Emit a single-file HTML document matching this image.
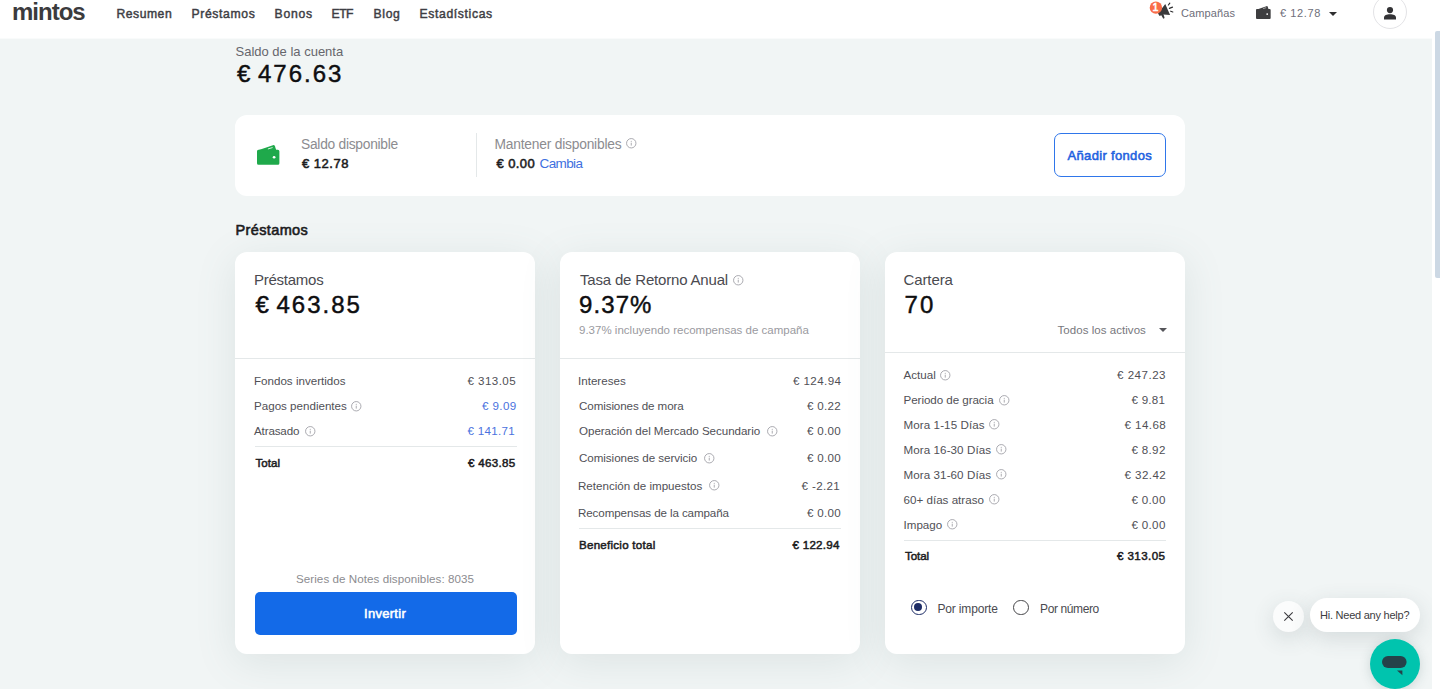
<!DOCTYPE html>
<html lang="es">
<head>
<meta charset="utf-8">
<title>Mintos</title>
<style>
*{box-sizing:border-box;margin:0;padding:0}
html,body{width:1440px;height:689px;overflow:hidden;background:#fff}
body{font-family:"Liberation Sans",sans-serif;color:#1c1c1e;position:relative;font-size:12px}
.t{position:absolute;white-space:nowrap;display:block}
svg{position:absolute;overflow:visible}
#view{position:absolute;left:0;top:38px;width:1432px;height:651px;overflow:hidden}
#view>main,#view>aside{top:-38px}
#page{position:absolute;left:0;top:38px;width:1432px;height:651px;background:#f1f5f5}
header{position:absolute;left:0;top:0;width:1440px;height:38px;background:#fff}
header:after{content:"";position:absolute;left:0;top:38px;width:1432px;height:1px;background:rgba(255,255,255,.55)}
main,section,nav,footer,aside{position:absolute;left:0;top:0}
.card{position:absolute;background:#fff;border-radius:12px}
.sh{box-shadow:0 8px 40px rgba(100,128,128,.14)}
.hl{position:absolute;height:1px;background:#e4e8e9}
.vl{position:absolute;width:1px;background:#e4e8e9}
.avatar{position:absolute;left:1373px;top:-5.5px;width:34px;height:34px;border-radius:50%;border:1px solid #e3e3e6;background:#fff}
.btn-o{position:absolute;left:1054px;top:133px;width:112px;height:44px;border:1px solid #2f76ea;border-radius:7px;background:#fff}
.btn-p{position:absolute;left:254.5px;top:591.5px;width:262px;height:43.5px;border-radius:5px;background:#136ae8}
.radio{position:absolute;width:15.6px;height:15.6px;border-radius:50%;border:1.6px solid #454548;background:#fff}
.radio.on{border-color:#1d2c66}
.radio.on:after{content:"";position:absolute;left:2.2px;top:2.2px;width:8px;height:8px;border-radius:50%;background:#1d2c66}
.sbthumb{position:absolute;left:1435px;top:31px;width:5px;height:247px;background:#ccd8e4;border-radius:2px 0 0 2px}
.bubble{position:absolute;left:1310px;top:598px;width:110px;height:34px;border-radius:17px;background:#fff;box-shadow:0 6px 22px rgba(60,80,90,.16)}
.close{position:absolute;left:1273px;top:601px;width:31px;height:31px;border-radius:50%;background:#fbfcfc;box-shadow:0 6px 22px rgba(60,80,90,.16)}
.fab{position:absolute;left:1369.5px;top:638.5px;width:50px;height:50px;border-radius:50%;background:#00c4ae;box-shadow:0 2px 12px rgba(40,80,80,.18)}
.logo{font-size:24px;font-weight:700;color:#3b3b3d;line-height:29px}
.nav{font-size:12.2px;font-weight:400;color:#3e3e44;line-height:15px;-webkit-text-stroke:0.45px #3e3e44}
.hr{font-size:11px;font-weight:400;color:#6e6e7a;line-height:13px}
.lbl14{font-size:13.8px;font-weight:400;color:#8c8c90;line-height:17px}
.lbl14a{font-size:13px;font-weight:400;color:#66666c;line-height:16px}
.val14{font-size:13px;font-weight:400;color:#1c1c1e;line-height:16px;-webkit-text-stroke:0.55px #1c1c1e}
.link14{font-size:13.5px;font-weight:400;color:#4070e0;line-height:16px}
.h2{font-size:14.5px;font-weight:400;color:#1c1c1e;line-height:17px;-webkit-text-stroke:0.6px #1c1c1e}
.ct{font-size:15px;font-weight:400;color:#4a4a50;line-height:18px}
.big{font-size:24px;font-weight:400;color:#0e0e10;line-height:29px;-webkit-text-stroke:0.45px #0e0e10;word-spacing:-3px}
.big2{font-size:24px;font-weight:400;color:#0e0e10;line-height:29px}
.row{font-size:11.6px;font-weight:400;color:#505056;line-height:14px}
.rowb{font-size:11.6px;font-weight:400;color:#1c1c1e;line-height:14px;-webkit-text-stroke:0.5px #1c1c1e}
.rowblue{font-size:11.6px;font-weight:400;color:#4a72de;line-height:14px}
.sub{font-size:11.5px;font-weight:400;color:#9a9aa0;line-height:14px}
.sel{font-size:11.5px;font-weight:400;color:#77777d;line-height:14px}
.note{font-size:11.6px;font-weight:400;color:#8c8c90;line-height:14px}
.btn{font-size:13px;font-weight:400;color:#ffffff;line-height:16px;-webkit-text-stroke:0.55px #ffffff}
.btno{font-size:13px;font-weight:400;color:#1f62e0;line-height:16px;-webkit-text-stroke:0.55px #1f62e0}
.rlbl{font-size:12px;font-weight:400;color:#4a4a50;line-height:14px}
.chat{font-size:11px;font-weight:400;color:#3c3c40;line-height:13px}
.badge{font-size:10.5px;font-weight:400;color:#ffffff;line-height:13px;-webkit-text-stroke:0.6px #fff}
</style>
</head>
<body>
<div id="page"></div>
<header>
  <span class="t logo" style="left:12.00px;top:-3.00px;letter-spacing:-1.000px">mintos</span>
  <nav>
  <span class="t nav" style="left:116.50px;top:7.00px;letter-spacing:0.500px">Resumen</span>
<span class="t nav" style="left:191.50px;top:7.00px;letter-spacing:0.625px">Préstamos</span>
<span class="t nav" style="left:274.50px;top:7.00px;letter-spacing:0.750px">Bonos</span>
<span class="t nav" style="left:331.50px;top:7.00px;letter-spacing:-0.500px">ETF</span>
<span class="t nav" style="left:373.50px;top:7.00px;letter-spacing:0.667px">Blog</span>
<span class="t nav" style="left:419.50px;top:7.00px;letter-spacing:0.636px">Estadísticas</span>
  </nav>
  <div class="hright">
    <!-- megaphone -->
    <svg style="left:1144px;top:0" width="36" height="24" viewBox="0 0 36 24">
      <path d="M21.25 3.9L26.1 14.9L19.4 14.5L19.9 15.4L20.6 18L19.3 18.7L17.3 15.2L15.6 16L14 13.6Z" fill="#3a3a3c"/>
      <path d="M24.4 5L25.8 3.1M25.4 8.4L28.5 7.1M26.7 11.2L28.8 12" stroke="#2c2c2e" stroke-width="1.15" stroke-linecap="round" fill="none"/>
      <circle cx="11.9" cy="7.65" r="6.2" fill="#f96d48"/>
    </svg>
    <span class="t badge" style="left:1152.60px;top:1.00px">1</span>
<span class="t hr" style="left:1181.00px;top:7.00px;letter-spacing:0.114px">Campañas</span>
<span class="t hr" style="left:1280.00px;top:7.00px;letter-spacing:0.600px">€ 12.78</span>
    <!-- wallet dark -->
    <svg style="left:1256.2px;top:6.4px" width="14.8" height="12.9" viewBox="0 0 22.6 19.7"><path fill="#3e3e40" d="M1.5 4.7H20.9A1.5 1.5 0 0 1 22.4 6.2V18.2A1.5 1.5 0 0 1 20.9 19.7H1.5A1.5 1.5 0 0 1 0 18.2V6.2A1.5 1.5 0 0 1 1.5 4.7Z"/><path fill="#3e3e40" d="M0.4 5.6L15.9 0.25Q17.4 -0.25 17.95 1.2L19.3 5.2Z"/><path d="M10.9 4L15.6 2.55" stroke="#fff" stroke-width="0.8" fill="none"/><circle cx="17.1" cy="12.25" r="1.35" fill="#fff"/></svg>
    <svg style="left:1329px;top:11.7px" width="8" height="4" viewBox="0 0 8 4"><path d="M0 0h8L4 4z" fill="#2e2e30"/></svg>
    <div class="avatar"></div>
    <svg style="left:1384px;top:6.5px" width="12" height="12.5" viewBox="0 0 12 12.5">
      <circle cx="6" cy="3.1" r="3.1" fill="#333336"/>
      <path d="M0 12.5V10.6C0 8.4 2.6 7.2 6 7.2s6 1.2 6 3.4v1.9z" fill="#333336"/>
    </svg>
  </div>
</header>
<div class="sbthumb"></div>
<div id="view">
<main>
  <section class="account">
    <span class="t lbl14a" style="left:235.50px;top:44.00px">Saldo de la cuenta</span>
<span class="t big" style="left:237.00px;top:59.00px;letter-spacing:2.000px">€ 476.63</span>
    <div class="card" style="left:235px;top:115px;width:950px;height:81px">
    </div>
    <!-- green wallet -->
    <svg style="left:257.4px;top:144.9px" width="22.6" height="19.7" viewBox="0 0 22.6 19.7"><path fill="#1fa94b" d="M1.5 4.7H20.9A1.5 1.5 0 0 1 22.4 6.2V18.2A1.5 1.5 0 0 1 20.9 19.7H1.5A1.5 1.5 0 0 1 0 18.2V6.2A1.5 1.5 0 0 1 1.5 4.7Z"/><path fill="#1fa94b" d="M0.4 5.6L15.9 0.25Q17.4 -0.25 17.95 1.2L19.3 5.2Z"/><path d="M10.9 4L15.6 2.55" stroke="#fff" stroke-width="0.8" fill="none"/><circle cx="17.1" cy="12.25" r="1.35" fill="#fff"/></svg>
    <div class="vl" style="left:476px;top:133px;height:44px"></div>
    <div class="btn-o"></div>
    <span class="t lbl14" style="left:301.00px;top:136.00px;letter-spacing:-0.267px">Saldo disponible</span>
<span class="t val14" style="left:302.00px;top:156.00px;letter-spacing:0.500px">€ 12.78</span>
<span class="t lbl14" style="left:494.50px;top:136.00px;letter-spacing:-0.211px">Mantener disponibles</span>
<span class="t val14" style="left:496.50px;top:156.00px;letter-spacing:0.400px">€ 0.00</span>
<span class="t link14" style="left:539.50px;top:156.00px;letter-spacing:-0.600px">Cambia</span>
<span class="t btno" style="left:1067.50px;top:148.00px;letter-spacing:0.333px">Añadir fondos</span>
    <svg class="info" style="left:626.0px;top:137.9px" width="10.5" height="10.5" viewBox="0 0 10.5 10.5"><circle cx="5.25" cy="5.25" r="4.7" fill="none" stroke="#a2a2a8" stroke-width="0.9"/><path d="M5.25 4.7v2.9" stroke="#a2a2a8" stroke-width="0.9"/><circle cx="5.25" cy="3.2" r="0.55" fill="#a2a2a8"/></svg>
  </section>
  <section class="loans">
    <span class="t h2" style="left:235.50px;top:222.00px;letter-spacing:0.375px">Préstamos</span>
    <div class="card sh" style="left:235px;top:252px;width:300px;height:402px"></div>
    <div class="hl" style="left:235px;top:358px;width:300px"></div>
    <div class="hl" style="left:254.5px;top:446px;width:262px"></div>
    <div class="btn-p"></div>
    <span class="t ct" style="left:254.00px;top:271.00px;letter-spacing:-0.250px">Préstamos</span>
<span class="t big" style="left:255.50px;top:290.00px;letter-spacing:2.000px">€ 463.85</span>
<span class="t row" style="left:254.00px;top:374.00px">Fondos invertidos</span>
<span class="t row" style="left:467.50px;top:374.00px;letter-spacing:0.429px">€ 313.05</span>
<span class="t row" style="left:254.00px;top:399.00px">Pagos pendientes</span>
<span class="t rowblue" style="left:482.00px;top:399.00px;letter-spacing:0.400px">€ 9.09</span>
<span class="t row" style="left:254.00px;top:424.00px;letter-spacing:-0.143px">Atrasado</span>
<span class="t rowblue" style="left:467.50px;top:424.00px;letter-spacing:0.286px">€ 141.71</span>
<span class="t rowb" style="left:255.50px;top:456.00px">Total</span>
<span class="t rowb" style="left:468.00px;top:456.00px;letter-spacing:0.286px">€ 463.85</span>
<span class="t note" style="left:296.00px;top:572.00px;letter-spacing:0.062px">Series de Notes disponibles: 8035</span>
<span class="t btn" style="left:364.00px;top:606.00px;letter-spacing:0.286px">Invertir</span>
    <svg class="info" style="left:351.0px;top:400.8px" width="10.5" height="10.5" viewBox="0 0 10.5 10.5"><circle cx="5.25" cy="5.25" r="4.7" fill="none" stroke="#a2a2a8" stroke-width="0.9"/><path d="M5.25 4.7v2.9" stroke="#a2a2a8" stroke-width="0.9"/><circle cx="5.25" cy="3.2" r="0.55" fill="#a2a2a8"/></svg>
    <svg class="info" style="left:304.5px;top:425.8px" width="10.5" height="10.5" viewBox="0 0 10.5 10.5"><circle cx="5.25" cy="5.25" r="4.7" fill="none" stroke="#a2a2a8" stroke-width="0.9"/><path d="M5.25 4.7v2.9" stroke="#a2a2a8" stroke-width="0.9"/><circle cx="5.25" cy="3.2" r="0.55" fill="#a2a2a8"/></svg>
  </section>
  <section class="returns">
    <div class="card sh" style="left:560px;top:252px;width:300px;height:402px"></div>
    <div class="hl" style="left:560px;top:358px;width:300px"></div>
    <div class="hl" style="left:579px;top:528px;width:262px"></div>
    <span class="t ct" style="left:580.00px;top:271.00px;letter-spacing:-0.180px">Tasa de Retorno Anual</span>
<span class="t big" style="left:579.00px;top:290.00px;letter-spacing:1.100px">9.37%</span>
<span class="t sub" style="left:579.00px;top:323.00px;letter-spacing:0.011px">9.37% incluyendo recompensas de campaña</span>
<span class="t row" style="left:578.00px;top:374.00px">Intereses</span>
<span class="t row" style="left:793.00px;top:374.00px;letter-spacing:0.400px">€ 124.94</span>
<span class="t row" style="left:579.00px;top:399.00px;letter-spacing:-0.094px">Comisiones de mora</span>
<span class="t row" style="left:807.00px;top:399.00px;letter-spacing:0.280px">€ 0.22</span>
<span class="t row" style="left:579.00px;top:424.00px;letter-spacing:-0.039px">Operación del Mercado Secundario</span>
<span class="t row" style="left:807.00px;top:424.00px;letter-spacing:0.280px">€ 0.00</span>
<span class="t row" style="left:579.00px;top:451.00px;letter-spacing:-0.048px">Comisiones de servicio</span>
<span class="t row" style="left:807.00px;top:451.00px;letter-spacing:0.280px">€ 0.00</span>
<span class="t row" style="left:578.00px;top:479.00px;letter-spacing:-0.010px">Retención de impuestos</span>
<span class="t row" style="left:801.50px;top:479.00px;letter-spacing:0.367px">€ -2.21</span>
<span class="t row" style="left:578.00px;top:506.00px;letter-spacing:-0.100px">Recompensas de la campaña</span>
<span class="t row" style="left:807.00px;top:506.00px;letter-spacing:0.280px">€ 0.00</span>
<span class="t rowb" style="left:579.00px;top:538.00px;letter-spacing:0.243px">Beneficio total</span>
<span class="t rowb" style="left:792.50px;top:538.00px;letter-spacing:0.257px">€ 122.94</span>
    <svg class="info" style="left:732.5px;top:274.8px" width="10.5" height="10.5" viewBox="0 0 10.5 10.5"><circle cx="5.25" cy="5.25" r="4.7" fill="none" stroke="#a2a2a8" stroke-width="0.9"/><path d="M5.25 4.7v2.9" stroke="#a2a2a8" stroke-width="0.9"/><circle cx="5.25" cy="3.2" r="0.55" fill="#a2a2a8"/></svg>
    <svg class="info" style="left:766.6px;top:425.6px" width="10.5" height="10.5" viewBox="0 0 10.5 10.5"><circle cx="5.25" cy="5.25" r="4.7" fill="none" stroke="#a2a2a8" stroke-width="0.9"/><path d="M5.25 4.7v2.9" stroke="#a2a2a8" stroke-width="0.9"/><circle cx="5.25" cy="3.2" r="0.55" fill="#a2a2a8"/></svg>
    <svg class="info" style="left:703.6px;top:452.8px" width="10.5" height="10.5" viewBox="0 0 10.5 10.5"><circle cx="5.25" cy="5.25" r="4.7" fill="none" stroke="#a2a2a8" stroke-width="0.9"/><path d="M5.25 4.7v2.9" stroke="#a2a2a8" stroke-width="0.9"/><circle cx="5.25" cy="3.2" r="0.55" fill="#a2a2a8"/></svg>
    <svg class="info" style="left:708.8px;top:480.1px" width="10.5" height="10.5" viewBox="0 0 10.5 10.5"><circle cx="5.25" cy="5.25" r="4.7" fill="none" stroke="#a2a2a8" stroke-width="0.9"/><path d="M5.25 4.7v2.9" stroke="#a2a2a8" stroke-width="0.9"/><circle cx="5.25" cy="3.2" r="0.55" fill="#a2a2a8"/></svg>
  </section>
  <section class="portfolio">
    <div class="card sh" style="left:885px;top:252px;width:300px;height:402px"></div>
    <div class="hl" style="left:885px;top:352px;width:300px"></div>
    <div class="hl" style="left:904px;top:540px;width:262px"></div>
    <svg style="left:1158.5px;top:328px" width="8" height="4" viewBox="0 0 8 4"><path d="M0 0h8L4 4z" fill="#55555a"/></svg>
    <div class="radio on" style="left:911.2px;top:599.6px"></div>
    <div class="radio" style="left:1013.2px;top:599.6px"></div>
    <span class="t ct" style="left:903.50px;top:271.00px;letter-spacing:-0.100px">Cartera</span>
<span class="t big" style="left:904.50px;top:290.00px;letter-spacing:2.200px">70</span>
<span class="t sel" style="left:1057.50px;top:323.00px;letter-spacing:0.050px">Todos los activos</span>
<span class="t row" style="left:903.50px;top:368.00px;letter-spacing:0.040px">Actual</span>
<span class="t row" style="left:1117.00px;top:368.00px;letter-spacing:0.486px">€ 247.23</span>
<span class="t row" style="left:903.50px;top:393.00px;letter-spacing:-0.050px">Periodo de gracia</span>
<span class="t row" style="left:1131.50px;top:393.00px;letter-spacing:0.240px">€ 9.81</span>
<span class="t row" style="left:903.50px;top:418.00px;letter-spacing:0.092px">Mora 1-15 Días</span>
<span class="t row" style="left:1124.50px;top:418.00px;letter-spacing:0.433px">€ 14.68</span>
<span class="t row" style="left:903.50px;top:443.00px;letter-spacing:0.086px">Mora 16-30 Días</span>
<span class="t row" style="left:1131.50px;top:443.00px;letter-spacing:0.320px">€ 8.92</span>
<span class="t row" style="left:903.50px;top:468.00px;letter-spacing:0.086px">Mora 31-60 Días</span>
<span class="t row" style="left:1124.50px;top:468.00px;letter-spacing:0.433px">€ 32.42</span>
<span class="t row" style="left:903.50px;top:493.00px;letter-spacing:0.014px">60+ días atraso</span>
<span class="t row" style="left:1131.50px;top:493.00px;letter-spacing:0.320px">€ 0.00</span>
<span class="t row" style="left:903.50px;top:518.00px">Impago</span>
<span class="t row" style="left:1131.50px;top:518.00px;letter-spacing:0.320px">€ 0.00</span>
<span class="t rowb" style="left:905.00px;top:549.00px;letter-spacing:-0.100px">Total</span>
<span class="t rowb" style="left:1117.00px;top:549.00px;letter-spacing:0.400px">€ 313.05</span>
<span class="t rlbl" style="left:937.50px;top:602.00px;letter-spacing:-0.160px">Por importe</span>
<span class="t rlbl" style="left:1040.00px;top:602.00px;letter-spacing:-0.378px">Por número</span>
    <svg class="info" style="left:940.2px;top:369.6px" width="10.5" height="10.5" viewBox="0 0 10.5 10.5"><circle cx="5.25" cy="5.25" r="4.7" fill="none" stroke="#a2a2a8" stroke-width="0.9"/><path d="M5.25 4.7v2.9" stroke="#a2a2a8" stroke-width="0.9"/><circle cx="5.25" cy="3.2" r="0.55" fill="#a2a2a8"/></svg>
    <svg class="info" style="left:999.0px;top:394.6px" width="10.5" height="10.5" viewBox="0 0 10.5 10.5"><circle cx="5.25" cy="5.25" r="4.7" fill="none" stroke="#a2a2a8" stroke-width="0.9"/><path d="M5.25 4.7v2.9" stroke="#a2a2a8" stroke-width="0.9"/><circle cx="5.25" cy="3.2" r="0.55" fill="#a2a2a8"/></svg>
    <svg class="info" style="left:989.4px;top:419.4px" width="10.5" height="10.5" viewBox="0 0 10.5 10.5"><circle cx="5.25" cy="5.25" r="4.7" fill="none" stroke="#a2a2a8" stroke-width="0.9"/><path d="M5.25 4.7v2.9" stroke="#a2a2a8" stroke-width="0.9"/><circle cx="5.25" cy="3.2" r="0.55" fill="#a2a2a8"/></svg>
    <svg class="info" style="left:996.4px;top:444.4px" width="10.5" height="10.5" viewBox="0 0 10.5 10.5"><circle cx="5.25" cy="5.25" r="4.7" fill="none" stroke="#a2a2a8" stroke-width="0.9"/><path d="M5.25 4.7v2.9" stroke="#a2a2a8" stroke-width="0.9"/><circle cx="5.25" cy="3.2" r="0.55" fill="#a2a2a8"/></svg>
    <svg class="info" style="left:996.4px;top:469.4px" width="10.5" height="10.5" viewBox="0 0 10.5 10.5"><circle cx="5.25" cy="5.25" r="4.7" fill="none" stroke="#a2a2a8" stroke-width="0.9"/><path d="M5.25 4.7v2.9" stroke="#a2a2a8" stroke-width="0.9"/><circle cx="5.25" cy="3.2" r="0.55" fill="#a2a2a8"/></svg>
    <svg class="info" style="left:989.4px;top:494.4px" width="10.5" height="10.5" viewBox="0 0 10.5 10.5"><circle cx="5.25" cy="5.25" r="4.7" fill="none" stroke="#a2a2a8" stroke-width="0.9"/><path d="M5.25 4.7v2.9" stroke="#a2a2a8" stroke-width="0.9"/><circle cx="5.25" cy="3.2" r="0.55" fill="#a2a2a8"/></svg>
    <svg class="info" style="left:946.6px;top:519.4px" width="10.5" height="10.5" viewBox="0 0 10.5 10.5"><circle cx="5.25" cy="5.25" r="4.7" fill="none" stroke="#a2a2a8" stroke-width="0.9"/><path d="M5.25 4.7v2.9" stroke="#a2a2a8" stroke-width="0.9"/><circle cx="5.25" cy="3.2" r="0.55" fill="#a2a2a8"/></svg>
  </section>
</main>
<aside class="chat">
  <div class="close"></div>
  <svg style="left:1284px;top:611.5px" width="9" height="9" viewBox="0 0 9 9"><path d="M0.3 0.3L8.7 8.7M8.7 0.3L0.3 8.7" stroke="#3a3a3e" stroke-width="1.1" fill="none"/></svg>
  <div class="bubble"></div>
  <span class="t chat" style="left:1320.00px;top:609.00px;letter-spacing:-0.235px">Hi. Need any help?</span>
  <div class="fab"></div>
  <svg style="left:1382.4px;top:656px" width="25" height="20" viewBox="0 0 25 20">
    <rect x="0" y="0" width="24.6" height="12" rx="6" fill="#25424a"/>
    <path d="M15 14.6h5.4v4.6z" fill="#25424a"/>
  </svg>
</aside>
</div>
</body>
</html>
